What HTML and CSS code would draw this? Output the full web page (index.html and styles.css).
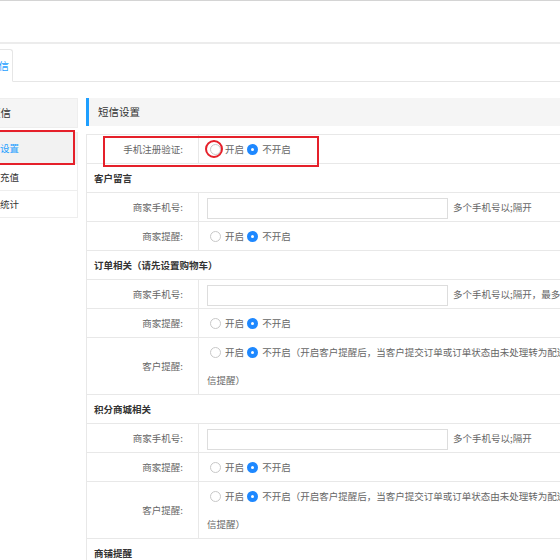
FILE: index.html
```html
<!DOCTYPE html>
<html lang="zh-CN">
<head>
  <meta charset="UTF-8" />
  <meta name="viewport" content="width=device-width, initial-scale=1.0"/>
  <title>短信设置</title>
  <link rel="stylesheet" href="styles.css">
</head>
<body>
<div class="page">

  <div class="topbar"></div>

  <div class="tabs">
    <div class="tab">短信</div>
  </div>

  <div class="layout">
    <!-- 左侧菜单 -->
    <div class="side">
      <div class="side-title">短信</div>
      <div class="side-item ativo">短信设置</div>
      <div class="side-item">短信充值</div>
      <div class="side-item">短信统计</div>
      <div class="mark mark-side"></div>
    </div>

    <!-- 右侧内容 -->
    <div class="main">
      <div class="main-title">短信设置</div>

      <div class="form-box">
        <table class="form">
          <tr>
            <td class="label">手机注册验证:</td>
            <td class="value">
              <span class="radio"></span><span class="opt">开启</span>
              <span class="radio on"></span><span class="opt">不开启</span>
            </td>
          </tr>
          <tr class="section"><td colspan="2">客户留言</td></tr>
          <tr>
            <td class="label">商家手机号:</td>
            <td class="value"><input type="text" class="campo"><span class="dica">多个手机号以;隔开</span></td>
          </tr>
          <tr>
            <td class="label">商家提醒:</td>
            <td class="value">
              <span class="radio"></span><span class="opt">开启</span>
              <span class="radio on"></span><span class="opt">不开启</span>
            </td>
          </tr>

          <tr class="section"><td colspan="2">订单相关（请先设置购物车）</td></tr>
          <tr>
            <td class="label">商家手机号:</td>
            <td class="value"><input type="text" class="campo"><span class="dica">多个手机号以;隔开，最多5个</span></td>
          </tr>
          <tr>
            <td class="label">商家提醒:</td>
            <td class="value">
              <span class="radio"></span><span class="opt">开启</span>
              <span class="radio on"></span><span class="opt">不开启</span>
            </td>
          </tr>
          <tr>
            <td class="label">客户提醒:</td>
            <td class="value">
              <span class="radio"></span><span class="opt">开启</span>
              <span class="radio on"></span><span class="opt">不开启（开启客户提醒后，当客户提交订单或订单状态由未处理转为配送中时，客户会收到短</span><br>信提醒）
            </td>
          </tr>

          <tr class="section"><td colspan="2">积分商城相关</td></tr>
          <tr>
            <td class="label">商家手机号:</td>
            <td class="value"><input type="text" class="campo"><span class="dica">多个手机号以;隔开</span></td>
          </tr>
          <tr>
            <td class="label">商家提醒:</td>
            <td class="value">
              <span class="radio"></span><span class="opt">开启</span>
              <span class="radio on"></span><span class="opt">不开启</span>
            </td>
          </tr>
          <tr>
            <td class="label">客户提醒:</td>
            <td class="value">
              <span class="radio"></span><span class="opt">开启</span>
              <span class="radio on"></span><span class="opt">不开启（开启客户提醒后，当客户提交订单或订单状态由未处理转为配送中时，客户会收到短</span><br>信提醒）
            </td>
          </tr>

          <tr class="section"><td colspan="2">商铺提醒</td></tr>
          <tr>
            <td class="label">商家提醒:</td>
            <td class="value">
              <span class="radio"></span><span class="opt">开启</span>
              <span class="radio on"></span><span class="opt">不开启</span>
            </td>
          </tr>
        </table>

        <!-- marcações vermelhas -->
        <div class="mark mark-row"></div>
        <div class="mark mark-radio"></div>
      </div>
    </div>
  </div>

</div>
</body>
</html>
```

FILE: styles.css
```css
body {
  margin: 0;
  font-family: "Noto Sans CJK SC", "Noto Sans", sans-serif;
  font-size: 9.5px;
  color: #666;
  background: #fff;
  overflow: hidden;
}
.page {
  width: 820px;
  margin-left: -40px;
}
.topbar {
  height: 41px;
  border-top: 1px solid #d4d4d4;
  border-bottom: 2px solid #ececec;
}
.tabs {
  height: 37px;
  display: flex;
  align-items: flex-end;
  border-bottom: 1px solid #e6e6e6;
}
.tab {
  width: 48px;
  height: 31px;
  line-height: 31px;
  margin-bottom: -1px;
  border: 1px solid #e6e6e6;
  border-bottom-color: #fff;
  border-radius: 3px 3px 0 0;
  background: #fff;
  color: #1e9fff;
  font-size: 10.5px;
  text-align: right;
  padding-right: 3px;
}
.layout {
  display: flex;
  gap: 8px;
  padding-top: 16px;
}
.side {
  position: relative;
  width: 118px;
  flex: none;
  align-self: flex-start;
}
.side-title {
  height: 28px;
  line-height: 28px;
  padding-left: 29px;
  background: #f5f5f5;
  border: 1px solid #eee;
  color: #333;
  font-size: 10.5px;
  margin-bottom: 4px;
}
.side-item {
  height: 26px;
  line-height: 26px;
  padding-left: 20px;
  border: 1px solid #eee;
  border-top: none;
  color: #333;
  font-size: 9.5px;
}
.side-item.ativo {
  height: 30px;
  line-height: 30px;
  border-top: 1px solid #eee;
  background: #f2f2f2;
  color: #1e9fff;
}
.main {
  flex: 1;
}
.main-title {
  height: 28px;
  line-height: 28px;
  padding-left: 9px;
  background: #f5f5f5;
  border-left: 3px solid #1e9fff;
  color: #333;
  font-size: 10.5px;
}
.form-box {
  position: relative;
  margin-top: 8px;
}
.form {
  width: 100%;
  border-collapse: collapse;
}
.form td {
  border: 1px solid #e8e8e8;
  height: 28px;
  line-height: 28px;
  padding: 0;
}
.form .label {
  width: 96px;
  text-align: right;
  padding-right: 15px;
}
.form .value {
  padding-left: 8px;
  white-space: nowrap;
}
.section td {
  font-weight: bold;
  color: #333;
  padding-left: 7px;
}
.radio {
  display: inline-block;
  width: 9px;
  height: 9px;
  border: 1px solid #c8c8c8;
  border-radius: 50%;
  vertical-align: -2px;
  margin: 0 4px 0 3px;
  background: #fff;
}
.radio.on {
  width: 3px;
  height: 3px;
  border: 4px solid #1e88ff;
  margin-left: 1px;
}
.campo {
  width: 241px;
  height: 21px;
  box-sizing: border-box;
  border: 1px solid #ddd;
  vertical-align: middle;
  margin: 0;
}
.dica {
  margin-left: 5px;
}
.mark {
  position: absolute;
  border: 2px solid #e5202a;
  box-sizing: border-box;
}
.mark-side {
  left: 38px;
  top: 32px;
  width: 77px;
  height: 35px;
}
.mark-row {
  left: 17px;
  top: 2px;
  width: 216px;
  height: 31px;
}
.mark-radio {
  left: 119px;
  top: 6px;
  width: 18px;
  height: 18px;
  border-radius: 50%;
}
```
